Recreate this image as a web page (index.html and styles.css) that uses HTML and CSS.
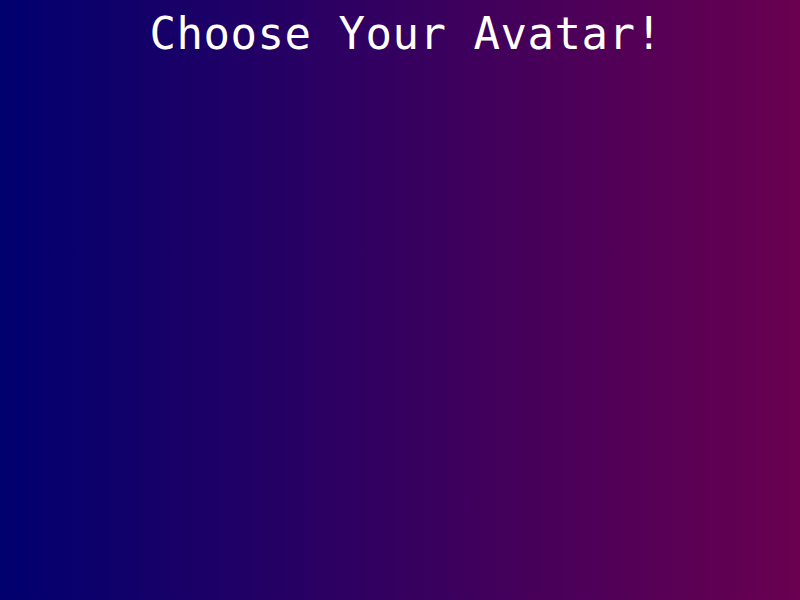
FILE: index.html
```html
<!DOCTYPE html>
<html lang="en">
<head>
<meta charset="utf-8">
<title>Choose Your Avatar!</title>
<link rel="stylesheet" href="styles.css">
</head>
<body>
<main class="screen">
  <h1 class="title">Choose Your Avatar!</h1>
</main>
</body>
</html>
```

FILE: styles.css
```css
html, body {
  margin: 0;
  padding: 0;
  width: 800px;
  height: 600px;
  overflow: hidden;
}
.screen {
  width: 800px;
  height: 600px;
  background: linear-gradient(to right, #00006f, #6a0050);
  display: flex;
  flex-direction: column;
  align-items: center;
}
.title {
  margin: 0;
  padding-top: 8px;
  padding-left: 12px;
  font-family: "DejaVu Sans Mono", "Liberation Mono", monospace;
  font-weight: normal;
  font-size: 44px;
  letter-spacing: 0.5px;
  line-height: 52px;
  color: #ffffff;
  text-align: center;
}
```
